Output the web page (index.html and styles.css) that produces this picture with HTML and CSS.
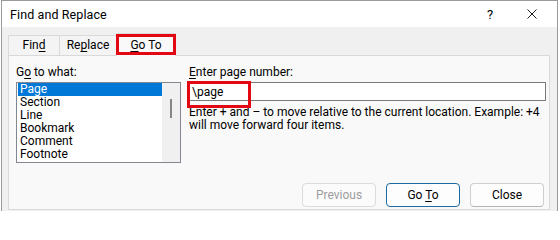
FILE: index.html
```html
<!DOCTYPE html>
<html>
<head>
<meta charset="utf-8">
<link rel="stylesheet" href="styles.css">
</head>
<body>
<div class="window">
  <div class="titlebar">
    <span class="title">Find and Replace</span>
    <span class="help">?</span>
    <span class="close"><svg width="10" height="10" viewBox="0 0 10 10"><path d="M0.5 0.5 L9.5 9.5 M9.5 0.5 L0.5 9.5" stroke="#1a1a1a" stroke-width="1" fill="none"/></svg></span>
  </div>
  <div class="body">
    <div class="tabs">
      <div class="tab tab-find"><span>Fin<u>d</u></span></div>
      <div class="tab tab-replace"><span>Re<u>p</u>lace</span></div>
      <div class="tab tab-goto active marked"><span><u>G</u>o To</span></div>
    </div>
    <div class="panel">
      <div class="cols">
        <div class="left">
          <div class="label">G<u>o</u> to what:</div>
          <div class="listbox">
            <div class="items">
              <div class="item selected">Page</div>
              <div class="item">Section</div>
              <div class="item">Line</div>
              <div class="item">Bookmark</div>
              <div class="item">Comment</div>
              <div class="item">Footnote</div>
            </div>
            <div class="scroll"><div class="thumb"></div></div>
          </div>
        </div>
        <div class="right">
          <div class="label label-r"><u>E</u>nter page number:</div>
          <div class="input"><span class="val marked">\page</span></div>
          <div class="hint"><div class="hint-line">Enter + and – to move relative to the current location. Example: +4</div><div class="hint-line">will move forward four items.</div></div>
        </div>
      </div>
      <div class="buttons">
        <div class="btn disabled"><span>Previous</span></div>
        <div class="btn default"><span>Go <u>T</u>o</span></div>
        <div class="btn"><span>Close</span></div>
      </div>
    </div>
  </div>
</div>
</body>
</html>
```

FILE: styles.css
```css
* { box-sizing: border-box; }
html, body { margin: 0; padding: 0; background: #ffffff; }
body {
  font-family: Roboto, "Noto Sans", sans-serif;
  font-size: 12px;
  color: #000;
  width: 560px;
  height: 211px;
  overflow: hidden;
}
u { text-decoration-thickness: 1px; text-underline-offset: 2px; }

.window {
  margin-left: 1px;
  width: 557px;
  height: 212px;
  border: 1px solid #9a9a9a;
  display: flex;
  flex-direction: column;
}

.titlebar {
  height: 26px;
  background: #ffffff;
  display: flex;
  align-items: center;
  padding-left: 8px;
  flex: none;
}
.title { font-size: 12.5px; letter-spacing: 0.1px; flex: 1; }
.help { width: 14px; font-size: 13px; margin-right: 26px; }
.close { width: 10px; height: 10px; margin-right: 20px; display: flex; }

.body {
  flex: 1;
  background: #f0f0f0;
  padding: 8px 0 0 6px;
  display: flex;
  flex-direction: column;
}

.tabs {
  display: flex;
  height: 20px;
  flex: none;
  position: relative;
  z-index: 2;
}
.tab {
  height: 20px;
  border: 1px solid #dadada;
  border-bottom: none;
  background: #f4f4f4;
  display: flex;
  align-items: center;
  justify-content: center;
  padding-bottom: 1px;
}
.tab-find { width: 52px; }
.tab-replace { width: 58px; margin-left: -1px; }
.tab-goto { width: 60px; margin-left: -1px; }
.tab.active {
  height: 23px;
  margin-top: -2px;
  background: #f9f9f9;
  padding-bottom: 0;
}

.marked { position: relative; }
.marked::after {
  content: "";
  position: absolute;
  border: 3px solid #e30613;
  pointer-events: none;
}
.tab.marked::after { left: -1px; right: -1px; top: 0; bottom: 1px; }
.val.marked::after { left: -5px; top: -4px; width: 58px; height: 21px; }

.panel {
  width: 542px;
  height: 155px;
  border: 1px solid #d9d9d9;
  background: #f9f9f9;
  display: flex;
  flex-direction: column;
  padding: 9px 5px 2px 7px;
  position: relative;
  z-index: 1;
}

.cols { display: flex; gap: 7px; }
.label { height: 14px; line-height: 14px; margin-bottom: 3px; }
.label-r { padding-left: 1px; }

.left { width: 165px; flex: none; }
.listbox {
  width: 165px;
  height: 81px;
  border: 1px solid #828790;
  background: #ffffff;
  display: flex;
}
.items { flex: 1; padding: 0 0 0 1px; }
.item {
  height: 13px;
  line-height: 13px;
  padding-left: 2px;
  white-space: nowrap;
}
.item.selected { background: #0078d7; color: #ffffff; }
.scroll {
  width: 18px;
  flex: none;
  background: #f0f0f0;
  position: relative;
  display: flex;
  justify-content: center;
  padding-top: 16px;
}
.thumb { width: 2px; height: 19px; background: #868686; }

.right { width: 358px; flex: none; }
.input {
  width: 358px;
  height: 19px;
  border: 1px solid #7a7a7a;
  background: #ffffff;
  display: flex;
  align-items: center;
  padding-left: 3px;
}
.val { line-height: 14px; }
.hint {
  margin-top: 5px;
  padding-left: 1px;
  white-space: nowrap;
}
.hint-line { height: 13px; line-height: 13px; }

.buttons {
  margin-top: auto;
  display: flex;
  justify-content: flex-end;
  gap: 10px;
}
.btn {
  width: 74px;
  height: 24px;
  border: 1px solid #cfcfcf;
  border-bottom-color: #b5b5b5;
  border-radius: 4px;
  background: #fdfdfd;
  display: flex;
  align-items: center;
  justify-content: center;
  padding-bottom: 1px;
}
.btn.disabled { color: #9d9d9d; border-color: #dcdcdc; background: #fbfbfb; }
.btn.default { border-color: #1b6aa5; }
```
